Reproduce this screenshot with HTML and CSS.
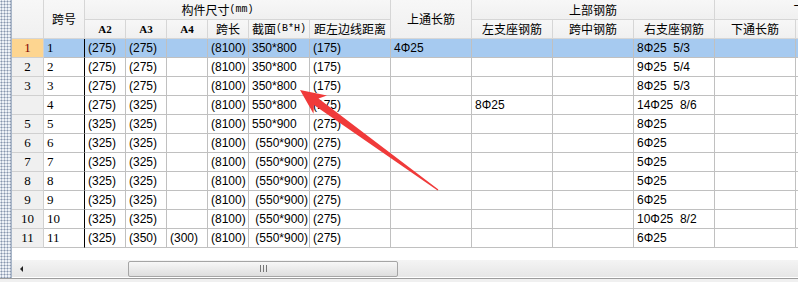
FILE: index.html
```html
<!DOCTYPE html>
<html lang="zh-CN">
<head>
  <meta charset="UTF-8" />
  <title>梁平法表格</title>
  <link rel="stylesheet" href="styles.css">
</head>
<body>
  <div class="panel">
    <div class="splitter"></div>
    <div class="grid-area">
      <div class="grid-wrap">
        <div class="grid">
          <!-- 表头 -->
          <div class="hd rs2"></div>
          <div class="hd rs2">跨号</div>
          <div class="hd cs6 grp-size">构件尺寸<small>(mm)</small></div>
          <div class="hd rs2">上通长筋</div>
          <div class="hd cs3">上部钢筋</div>
          <div class="hd cs2 grp-low">下部钢筋</div>
          <div class="hd lat">A2</div>
          <div class="hd lat">A3</div>
          <div class="hd lat">A4</div>
          <div class="hd">跨长</div>
          <div class="hd">截面<small>(B*H)</small></div>
          <div class="hd">距左边线距离</div>
          <div class="hd">左支座钢筋</div>
          <div class="hd">跨中钢筋</div>
          <div class="hd">右支座钢筋</div>
          <div class="hd">下通长筋</div>
          <div class="hd">下部钢筋</div>

          <!-- 数据行 -->
          <div class="row sel">
            <div class="idx">1</div><div class="no">1</div><div>(275)</div><div>(275)</div><div></div><div>(8100)</div><div>350*800</div><div>(175)</div>
            <div>4Φ25</div><div></div><div></div><div>8Φ25  5/3</div><div></div><div></div>
          </div>
          <div class="row">
            <div class="idx">2</div><div class="no">2</div><div>(275)</div><div>(275)</div><div></div><div>(8100)</div><div>350*800</div><div>(175)</div>
            <div></div><div></div><div></div><div>9Φ25  5/4</div><div></div><div></div>
          </div>
          <div class="row">
            <div class="idx">3</div><div class="no">3</div><div>(275)</div><div>(275)</div><div></div><div>(8100)</div><div>350*800</div><div>(175)</div>
            <div></div><div></div><div></div><div>8Φ25  5/3</div><div></div><div></div>
          </div>
          <div class="row">
            <div class="idx"></div><div class="no">4</div><div>(275)</div><div>(325)</div><div></div><div>(8100)</div><div>550*800</div><div>(175)</div>
            <div></div><div>8Φ25</div><div></div><div>14Φ25  8/6</div><div></div><div></div>
          </div>
          <div class="row">
            <div class="idx">5</div><div class="no">5</div><div>(325)</div><div>(325)</div><div></div><div>(8100)</div><div>550*900</div><div>(275)</div>
            <div></div><div></div><div></div><div>8Φ25</div><div></div><div></div>
          </div>
          <div class="row">
            <div class="idx">6</div><div class="no">6</div><div>(325)</div><div>(325)</div><div></div><div>(8100)</div><div> (550*900)</div><div>(275)</div>
            <div></div><div></div><div></div><div>6Φ25</div><div></div><div></div>
          </div>
          <div class="row">
            <div class="idx">7</div><div class="no">7</div><div>(325)</div><div>(325)</div><div></div><div>(8100)</div><div> (550*900)</div><div>(275)</div>
            <div></div><div></div><div></div><div>5Φ25</div><div></div><div></div>
          </div>
          <div class="row">
            <div class="idx">8</div><div class="no">8</div><div>(325)</div><div>(325)</div><div></div><div>(8100)</div><div> (550*900)</div><div>(275)</div>
            <div></div><div></div><div></div><div>5Φ25</div><div></div><div></div>
          </div>
          <div class="row">
            <div class="idx">9</div><div class="no">9</div><div>(325)</div><div>(325)</div><div></div><div>(8100)</div><div> (550*900)</div><div>(275)</div>
            <div></div><div></div><div></div><div>6Φ25</div><div></div><div></div>
          </div>
          <div class="row">
            <div class="idx">10</div><div class="no">10</div><div>(325)</div><div>(325)</div><div></div><div>(8100)</div><div> (550*900)</div><div>(275)</div>
            <div></div><div></div><div></div><div>10Φ25  8/2</div><div></div><div></div>
          </div>
          <div class="row">
            <div class="idx">11</div><div class="no">11</div><div>(325)</div><div>(350)</div><div>(300)</div><div>(8100)</div><div> (550*900)</div><div>(275)</div>
            <div></div><div></div><div></div><div>6Φ25</div><div></div><div></div>
          </div>
        </div>
      </div>
      <div class="hscroll">
        <div class="btn-left"><span class="tri"></span></div>
        <div class="thumb"><span class="grip"></span></div>
      </div>
    </div>
  </div>
  <div class="statusbar"></div>

  <!-- 标注箭头 -->
  <svg class="callout" width="798" height="282" viewBox="0 0 798 282">
    <polygon points="300,90 327,95.5 318.5,98.5 438.4,189.6 437.6,190.4 313.9,104.9 313.5,113.8" fill="#f03a3a"/>
  </svg>
</body>
</html>
```

FILE: styles.css
```css
html, body {
  margin: 0;
  height: 100%;
}
body {
  position: relative;
  overflow: hidden;
  background: #fff;
  color: #000;
  font: 12px "Liberation Sans", "Noto Sans CJK SC", sans-serif;
}
.panel {
  display: flex;
  height: 278px;
}
.splitter {
  flex: none;
  width: 11px;
  border-right: 1px solid #a9b6c8;
  background-color: #eef2f7;
  background-image: radial-gradient(circle, #8796ad 0.9px, transparent 1.1px);
  background-size: 3px 3px;
}
.grid-area {
  flex: 1;
  min-width: 0;
  display: flex;
  flex-direction: column;
}
.grid-wrap {
  height: 260px;
  overflow: hidden;
}

/* 表格 */
.grid {
  display: grid;
  width: 909px;
  grid-template-columns: 32px 41px 41px 41px 41px 41px 61px 81px 81px 81px 81px 81px 81px 125px;
  grid-template-rows: 20px 19px;
  grid-auto-rows: 19px;
}
.grid div {
  box-sizing: border-box;
  border-right: 1px solid #c0c0c0;
  border-bottom: 1px solid #c0c0c0;
  white-space: pre;
}
.grid .row {
  display: contents;
}
.grid .hd {
  display: flex;
  align-items: center;
  justify-content: center;
  background: linear-gradient(#f7f7f7, #f0f0f0);
  border-color: #d6d6d6;
  font-family: "Noto Sans CJK SC", sans-serif;
  line-height: 14px;
}
.hd small {
  font-family: "Liberation Mono", monospace;
  font-size: 10px;
  line-height: 10px;
}
.rs2 { grid-row: span 2; }
.cs2 { grid-column: span 2; }
.cs3 { grid-column: span 3; }
.cs6 { grid-column: span 6; }
.grid .grp-size { padding-right: 40px; }
.grid .lat {
  font-family: "Liberation Serif", serif;
  font-size: 11px;
  font-weight: bold;
}

.row div {
  line-height: 18px;
  padding-left: 3px;
}
.grid .row .idx {
  padding: 0;
  text-align: center;
  background: #f0f0f0;
  border-color: #d0d0d0;
  font-family: "Liberation Serif", serif;
  font-size: 13px;
}
.grid .row .no {
  border-right-color: #000;
  font-family: "Liberation Serif", serif;
  font-size: 13px;
}
.sel div { background: #a6caf0; }
.grid .sel .idx {
  background: #fdd590;
  color: #800000;
}

/* 滚动条 */
.hscroll {
  height: 17px;
  display: flex;
  align-items: center;
  background: linear-gradient(#f4f4f4, #e6e6e6);
}
.btn-left {
  width: 18px;
  display: flex;
  justify-content: center;
}
.tri {
  width: 0;
  height: 0;
  border-top: 3px solid transparent;
  border-bottom: 3px solid transparent;
  border-right: 3px solid #222;
}
.thumb {
  margin-left: 98px;
  width: 268px;
  height: 14px;
  border: 1px solid #a5a5a5;
  border-radius: 2px;
  background: linear-gradient(#f7f7f7, #dedede);
  display: flex;
  align-items: center;
  justify-content: center;
}
.grip {
  width: 7px;
  height: 7px;
  background: repeating-linear-gradient(90deg, #777 0 1px, transparent 1px 3px);
}
.statusbar {
  height: 4px;
  border-top: 1px solid #9c9c9c;
  background: #f0f0f0;
}
.callout {
  position: absolute;
  left: 0;
  top: 0;
  pointer-events: none;
}
```
